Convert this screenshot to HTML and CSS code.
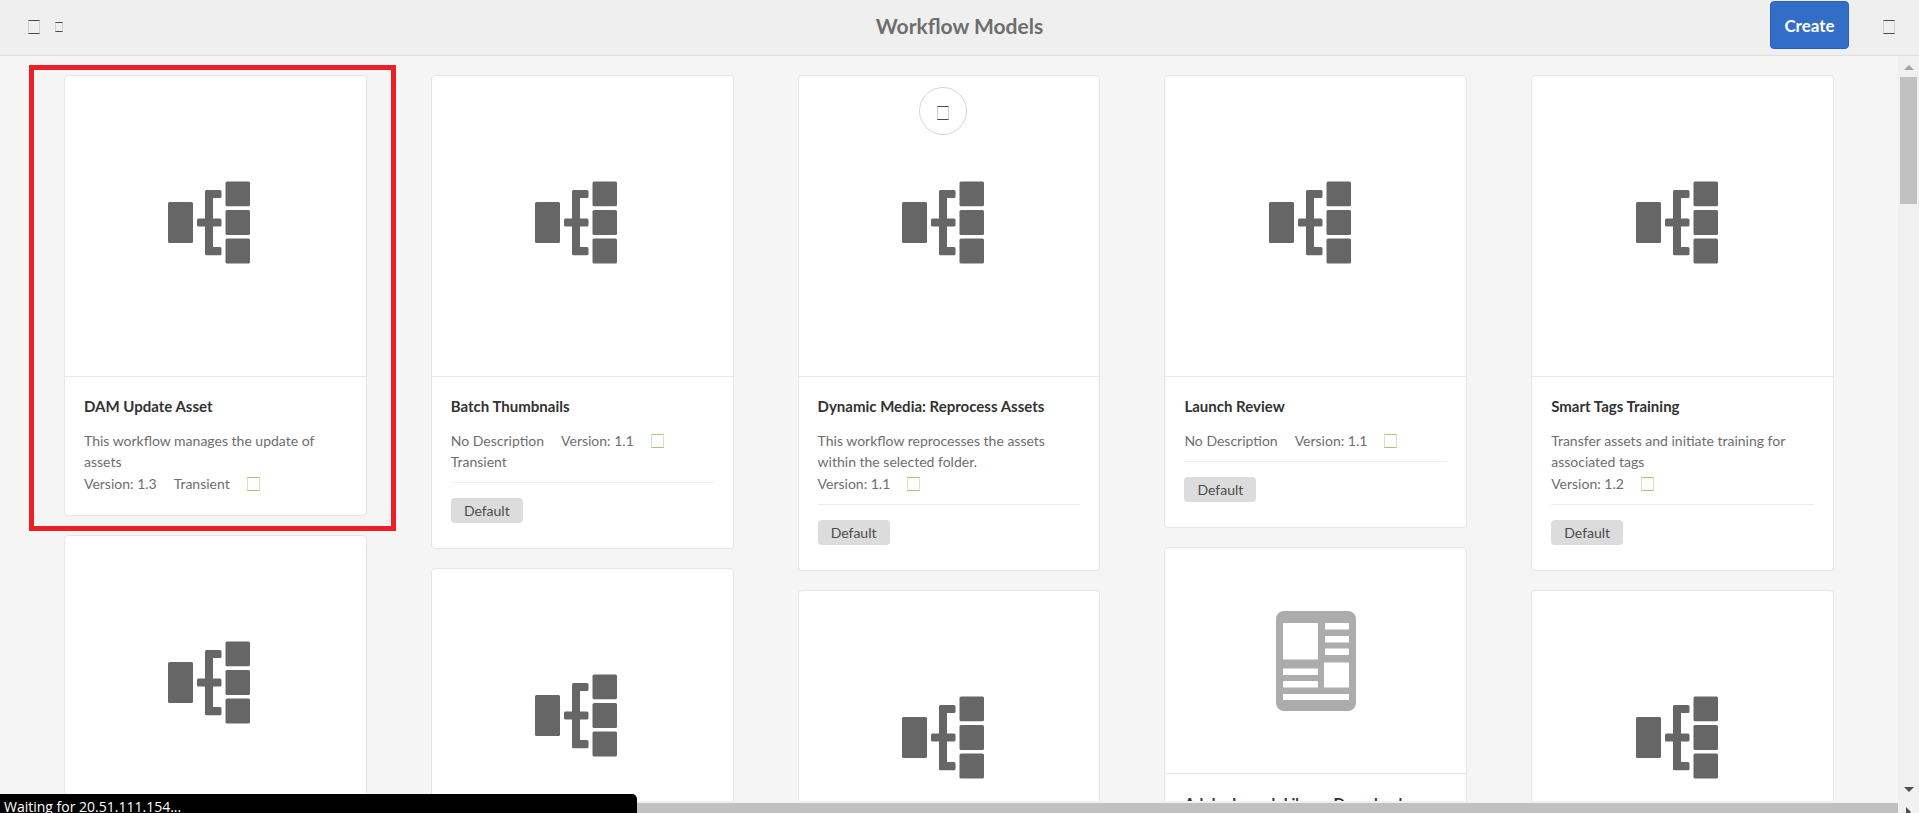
FILE: index.html
```html
<!DOCTYPE html>
<html lang="en">
<head>
  <meta charset="UTF-8">
  <meta name="viewport" content="width=device-width, initial-scale=1.0">
  <title>Workflow Models</title>
  <link rel="stylesheet" href="styles.css">
</head>
<body>

  <!-- shared icons -->
  <svg class="sprite" aria-hidden="true">
    <symbol id="workflow" viewBox="0 0 94 90">
      <rect x="0" y="21" width="25" height="41" rx="1.5" />
      <path d="M38.500 9H52a1.500 1.500 0 0 1 1.500 1.500V15.500A1.500 1.500 0 0 1 52 17H45V37.500H52a1.500 1.500 0 0 1 1.500 1.500V44a1.500 1.500 0 0 1-1.500 1.500H45V66H52a1.500 1.500 0 0 1 1.500 1.500V72.800a1.500 1.500 0 0 1-1.500 1.500H38.500A1.500 1.500 0 0 1 37 72.800V45.500H30.500A1.500 1.500 0 0 1 29 44V39a1.500 1.500 0 0 1 1.500-1.500H37V10.500A1.500 1.500 0 0 1 38.500 9Z" />
      <rect x="57.500" y="0.500" width="24.500" height="24.800" rx="1.500" />
      <rect x="57.500" y="29" width="24.500" height="25" rx="1.500" />
      <rect x="57.500" y="57.500" width="24.500" height="25" rx="1.500" />
    </symbol>
    <symbol id="news" viewBox="0 0 80 100">
      <path fill-rule="evenodd" d="M8 0H72a8 8 0 0 1 8 8V92a8 8 0 0 1-8 8H8a8 8 0 0 1-8-8V8a8 8 0 0 1 8-8ZM7 12V48.500H42V12ZM49 12V18.500H73V12ZM49 25V31.500H73V25ZM49 37.500V44H73V37.500ZM48 51.500V76.500H73V51.500ZM7 57.500V64H42V57.500ZM7 70V76.500H42V70ZM7 83V89H73V83Z" />
    </symbol>
  </svg>

  <header class="topbar">
    <div class="topbar-left">
      <button class="icon-btn" aria-label="Toggle rail"><span class="glyph"></span></button>
      <button class="icon-btn" aria-label="More"><span class="glyph glyph-small"></span></button>
    </div>
    <h1>Workflow Models</h1>
    <div class="topbar-right">
      <button class="create">Create</button>
      <button class="icon-btn" aria-label="Switch view"><span class="glyph"></span></button>
    </div>
  </header>

  <div class="viewport">
    <main class="masonry">
      <div class="column">
        <article class="card selected">
          <div class="thumb"><svg class="workflow"><use href="#workflow" /></svg></div>
          <div class="info">
            <h2>DAM Update Asset</h2>
            <p>This workflow manages the update of assets</p>
            <div class="props">
              <span>Version: 1.3</span>
              <span>Transient</span>
              <span class="status"></span>
            </div>
          </div>
        </article>
        <article class="card">
          <div class="thumb"><svg class="workflow"><use href="#workflow" /></svg></div>
        </article>
      </div>

      <div class="column">
        <article class="card">
          <div class="thumb"><svg class="workflow"><use href="#workflow" /></svg></div>
          <div class="info">
            <h2>Batch Thumbnails</h2>
            <div class="props">
              <span>No Description</span>
              <span>Version: 1.1</span>
              <span class="status"></span>
              <span>Transient</span>
            </div>
            <div class="tags"><span class="tag">Default</span></div>
          </div>
        </article>
        <article class="card">
          <div class="thumb"><svg class="workflow"><use href="#workflow" /></svg></div>
        </article>
      </div>

      <div class="column">
        <article class="card">
          <button class="quick" aria-label="Select"><span class="glyph"></span></button>
          <div class="thumb"><svg class="workflow"><use href="#workflow" /></svg></div>
          <div class="info">
            <h2>Dynamic Media: Reprocess Assets</h2>
            <p>This workflow reprocesses the assets within the selected folder.</p>
            <div class="props">
              <span>Version: 1.1</span>
              <span class="status"></span>
            </div>
            <div class="tags"><span class="tag">Default</span></div>
          </div>
        </article>
        <article class="card">
          <div class="thumb"><svg class="workflow"><use href="#workflow" /></svg></div>
        </article>
      </div>

      <div class="column">
        <article class="card">
          <div class="thumb"><svg class="workflow"><use href="#workflow" /></svg></div>
          <div class="info">
            <h2>Launch Review</h2>
            <div class="props">
              <span>No Description</span>
              <span>Version: 1.1</span>
              <span class="status"></span>
            </div>
            <div class="tags"><span class="tag">Default</span></div>
          </div>
        </article>
        <article class="card">
          <div class="thumb thumb-short"><svg class="news"><use href="#news" /></svg></div>
          <div class="info">
            <h2>Adobe Launch Library Download</h2>
          </div>
        </article>
      </div>

      <div class="column">
        <article class="card">
          <div class="thumb"><svg class="workflow"><use href="#workflow" /></svg></div>
          <div class="info">
            <h2>Smart Tags Training</h2>
            <p>Transfer assets and initiate training for associated tags</p>
            <div class="props">
              <span>Version: 1.2</span>
              <span class="status"></span>
            </div>
            <div class="tags"><span class="tag">Default</span></div>
          </div>
        </article>
        <article class="card">
          <div class="thumb"><svg class="workflow"><use href="#workflow" /></svg></div>
        </article>
      </div>
    </main>

    <div class="scroll-y">
      <span class="arrow arrow-up"></span>
      <span class="scroll-thumb"></span>
      <span class="arrow arrow-down"></span>
    </div>
    <div class="scroll-x"></div>
    <div class="scroll-corner"><span class="arrow-right"></span></div>
  </div>

  <div class="statusbar">Waiting for 20.51.111.154...</div>

</body>
</html>
```

FILE: styles.css
```css
* {
  box-sizing: border-box;
}
body {
  margin: 0;
  height: 100vh;
  display: flex;
  flex-direction: column;
  overflow: hidden;
  font-family: Lato, "Liberation Sans", sans-serif;
  font-size: 14px;
  background-color: #f5f5f5;
  color: #6e6e6e;
}
button {
  font: inherit;
  border: none;
  background: none;
  padding: 0;
  cursor: pointer;
}
.sprite {
  display: none;
}

/* header */
.topbar {
  display: grid;
  grid-template-columns: 1fr auto 1fr;
  align-items: start;
  height: 56px;
  flex: none;
  background-color: #efefef;
  border-bottom: 1px solid #dfdfdf;
}
.topbar h1 {
  margin: 0;
  font-size: 21px;
  line-height: 52px;
  font-weight: bold;
}
.topbar-left,
.topbar-right {
  display: flex;
  align-items: center;
  height: 54px;
}
.topbar-left {
  gap: 15px;
  padding-left: 28px;
}
.topbar-right {
  justify-content: flex-end;
  gap: 34px;
  padding-right: 24px;
}
.icon-btn {
  display: flex;
}
.glyph {
  display: block;
  width: 12px;
  height: 14px;
  border: 1px solid #d5cdcd;
  border-top-color: #4b4b4b;
  border-bottom-color: #4b4b4b;
}
.glyph-small {
  width: 8px;
  height: 10px;
}
.create {
  align-self: flex-start;
  margin-top: 1px;
  width: 79px;
  height: 48px;
  border: 1px solid #2a62b8;
  border-radius: 4px;
  background-color: #326ec8;
  color: #fff;
  font-size: 17px;
  font-weight: bold;
}

/* cards */
.viewport {
  flex: 1;
  min-height: 0;
  display: grid;
  grid-template-columns: 1fr 21px;
  grid-template-rows: minmax(0, 1fr) 12px;
}
.masonry {
  display: grid;
  grid-template-columns: repeat(5, minmax(0, 1fr));
  gap: 64px;
  padding: 19px 64px 0;
  overflow: hidden;
}
.column {
  display: flex;
  flex-direction: column;
  gap: 19px;
}
.card {
  position: relative;
  flex: none;
  border: 1px solid #e6e6e6;
  border-radius: 4px;
  background-color: #fff;
}
.selected::after {
  content: "";
  position: absolute;
  inset: -11px -30px -16px -36px;
  border: 5px solid #ec1f27;
}
.thumb {
  display: flex;
  align-items: center;
  justify-content: center;
  height: 300px;
}
.thumb-short {
  height: 225px;
}
.workflow {
  width: 94px;
  height: 90px;
  fill: #666;
}
.news {
  width: 80px;
  height: 100px;
  fill: #acacac;
}
.quick {
  position: absolute;
  top: 11px;
  left: calc(50% - 30px);
  display: flex;
  align-items: center;
  justify-content: center;
  width: 48px;
  height: 48px;
  padding-top: 3px;
  border: 1px solid #d6d6d6;
  border-radius: 50%;
}
.info {
  padding: 18px 19px 21px;
  border-top: 1px solid #e8e8e8;
}
.info h2 {
  margin: 0 0 13px;
  font-size: 15px;
  line-height: 22px;
  font-weight: bold;
  color: #323232;
}
.info p {
  margin: 0 0 1px;
  line-height: 21px;
}
.props {
  display: flex;
  flex-wrap: wrap;
  align-items: center;
  column-gap: 17px;
  line-height: 21px;
}
.status {
  width: 13px;
  height: 14px;
  border: 1px solid #d5e6bf;
  border-top-color: #a5c878;
  border-bottom-color: #a5c878;
}
.tags {
  margin-top: 10px;
  padding: 15px 0 4px;
  border-top: 1px solid #eee;
}
.tag {
  display: block;
  width: 72px;
  border-radius: 4px;
  background-color: #dcdcdc;
  color: #4b4b4b;
  line-height: 25px;
  text-align: center;
}

/* scrollbars */
.scroll-y {
  display: flex;
  flex-direction: column;
  align-items: center;
  padding: 9px 0;
  background-color: #f0f0f0;
}
.scroll-thumb {
  width: 17px;
  height: 127px;
  margin-top: 7px;
  background-color: #c1c1c1;
}
.arrow {
  border: 5px solid transparent;
}
.arrow-up {
  border-top: none;
  border-bottom-color: #a3a3a3;
}
.arrow-down {
  margin-top: auto;
  border-bottom: none;
  border-top-color: #505050;
}
.scroll-x {
  border-top: 2px solid #f1f1f1;
  background-color: #c1c1c1;
}
.scroll-corner {
  padding: 6px 8px 0;
  background-color: #f1f1f1;
  overflow: hidden;
}
.arrow-right {
  display: block;
  width: 0;
  border: 5px solid transparent;
  border-right: none;
  border-left-color: #505050;
}

/* browser status bubble */
.statusbar {
  position: fixed;
  left: 0;
  bottom: 0;
  width: 637px;
  height: 19px;
  padding: 3px 4px 0;
  border-top-right-radius: 5px;
  background-color: #000;
  color: #fff;
  font-family: "Open Sans", "Noto Sans", sans-serif;
  font-size: 14px;
  line-height: 20px;
  overflow: hidden;
}
```
